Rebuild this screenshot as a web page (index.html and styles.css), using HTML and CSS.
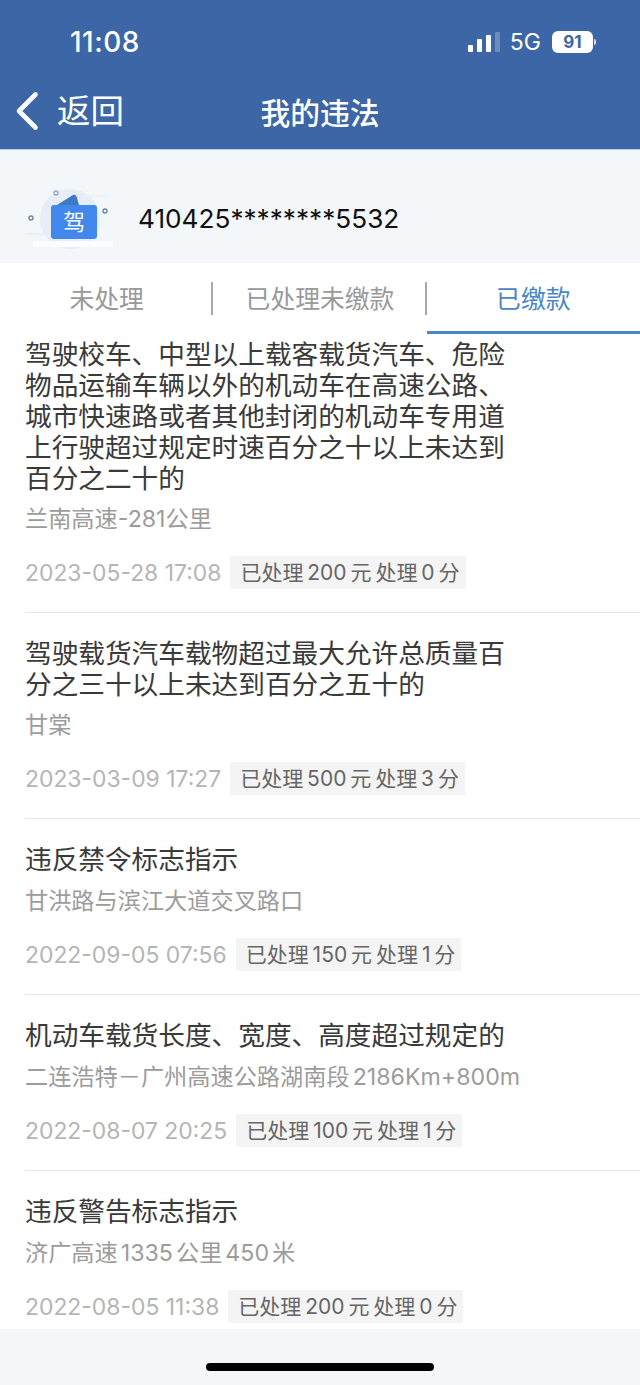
FILE: index.html

```html
<!DOCTYPE html>
<html lang="zh-CN">
<head>
  <meta charset="UTF-8" />
  <meta name="viewport" content="width=device-width, initial-scale=1.0"/>
  <title>我的违法</title>
  <link rel="stylesheet" href="styles.css">
</head>
<body>
  <div class="page">
    <header class="header">
      <div class="status-bar">
        <div class="time">11:08</div>
        <div class="status-right">
          <div class="signal">
            <span class="bar bar1"></span>
            <span class="bar bar2"></span>
            <span class="bar bar3"></span>
            <span class="bar bar4"></span>
          </div>
          <div class="network">5G</div>
          <div class="battery">91</div>
          <div class="battery-nub"></div>
        </div>
      </div>
      <div class="nav">
        <div class="back">
          <svg class="back-icon" width="24" height="40" viewBox="0 0 24 40">
            <polyline points="20.5,3.5 4,20 20.5,36.5" fill="none" stroke="#fff" stroke-width="4.6" stroke-linecap="round" stroke-linejoin="round"/>
          </svg>
          <span class="back-text">返回</span>
        </div>
        <div class="nav-title">我的违法</div>
      </div>
    </header>

    <section class="licence">
      <svg class="licence-icon" width="92" height="64" viewBox="0 0 92 64">
        <circle cx="45" cy="31" r="30" fill="#e6edf7"/>
        <rect x="8" y="53" width="80" height="6" fill="#fbfdfe"/>
        <rect x="0" y="45" width="30" height="2" fill="#eaf0f6"/>
        <rect x="60" y="7" width="24" height="2" fill="#eef2f8"/>
        <path d="M32 17 L48 7 Q51 6 52 10 L54 17 Z" fill="#3f78c4"/>
        <rect x="26" y="17" width="46" height="34" rx="3" fill="#4187ec"/>
        <text x="49" y="42" class="licence-char">驾</text>
        <circle cx="31" cy="5" r="2" fill="none" stroke="#9aa8c8" stroke-width="1.4"/>
        <circle cx="80" cy="23" r="2" fill="none" stroke="#6c86a8" stroke-width="1.4"/>
        <circle cx="6" cy="30" r="2" fill="none" stroke="#6c86a8" stroke-width="1.4"/>
      </svg>
      <div class="licence-no">410425********5532</div>
    </section>

    <nav class="tabs">
      <div class="tab">未处理</div>
      <div class="tab">已处理未缴款</div>
      <div class="tab active">已缴款</div>
    </nav>

    <main class="list">
      <div class="item first">
        <div class="item-title">驾驶校车、中型以上载客载货汽车、危险物品运输车辆以外的机动车在高速公路、城市快速路或者其他封闭的机动车专用道上行驶超过规定时速百分之十以上未达到百分之二十的</div>
        <div class="item-place">兰南高速-281公里</div>
        <div class="item-meta">
          <span class="item-date">2023-05-28 17:08</span>
          <span class="item-tag">已处理 200 元 处理 0 分</span>
        </div>
      </div>
      <div class="item">
        <div class="item-title">驾驶载货汽车载物超过最大允许总质量百分之三十以上未达到百分之五十的</div>
        <div class="item-place">甘棠</div>
        <div class="item-meta">
          <span class="item-date">2023-03-09 17:27</span>
          <span class="item-tag">已处理 500 元 处理 3 分</span>
        </div>
      </div>
      <div class="item">
        <div class="item-title">违反禁令标志指示</div>
        <div class="item-place">甘洪路与滨江大道交叉路口</div>
        <div class="item-meta">
          <span class="item-date">2022-09-05 07:56</span>
          <span class="item-tag">已处理 150 元 处理 1 分</span>
        </div>
      </div>
      <div class="item">
        <div class="item-title">机动车载货长度、宽度、高度超过规定的</div>
        <div class="item-place">二连浩特－广州高速公路湖南段 2186Km+800m</div>
        <div class="item-meta">
          <span class="item-date">2022-08-07 20:25</span>
          <span class="item-tag">已处理 100 元 处理 1 分</span>
        </div>
      </div>
      <div class="item">
        <div class="item-title">违反警告标志指示</div>
        <div class="item-place">济广高速 1335 公里 450 米</div>
        <div class="item-meta">
          <span class="item-date">2022-08-05 11:38</span>
          <span class="item-tag">已处理 200 元 处理 0 分</span>
        </div>
      </div>
    </main>

    <div class="home-area">
      <div class="home-bar"></div>
    </div>
  </div>
</body>
</html>
```

FILE: styles.css

```css
* {
  box-sizing: border-box;
}
body {
  margin: 0;
  padding: 0;
  font-family: 'Inter', 'Noto Sans CJK SC', sans-serif;
  background-color: #f3f7f9;
}
.page {
  width: 640px;
  height: 1385px;
  display: flex;
  flex-direction: column;
  overflow: hidden;
}
.header {
  height: 150px;
  background-color: #3c66a5;
  border-bottom: 1px solid #b4cbe2;
  color: #fff;
  flex-shrink: 0;
}
.status-bar {
  height: 84px;
  display: flex;
  align-items: center;
  justify-content: space-between;
  padding: 0 44px 0 70px;
}
.time {
  font-size: 28px;
  font-weight: 500;
  letter-spacing: 0.5px;
}
.status-right {
  display: flex;
  align-items: center;
}
.signal {
  display: flex;
  align-items: flex-end;
  gap: 4px;
  height: 20px;
  margin-right: 10px;
}
.bar {
  width: 5px;
  background-color: #fff;
  border-radius: 1px;
}
.bar1 { height: 7px; }
.bar2 { height: 13px; }
.bar3 { height: 17px; }
.bar4 { height: 20px; background-color: #6c8cbc; }
.network {
  font-size: 23px;
  margin-right: 11px;
}
.battery {
  width: 41px;
  height: 22px;
  background-color: #fff;
  border-radius: 6px;
  color: #3c66a5;
  font-size: 17px;
  font-weight: 700;
  line-height: 22px;
  text-align: center;
}
.battery-nub {
  width: 2px;
  height: 6px;
  margin-left: 1px;
  background-color: #d5deec;
  border-radius: 0 2px 2px 0;
}
.nav {
  height: 55px;
  position: relative;
  display: flex;
  align-items: center;
  justify-content: center;
}
.back {
  position: absolute;
  left: 15px;
  top: 7px;
  display: flex;
  align-items: center;
  gap: 18px;
}
.back-text {
  font-size: 33.5px;
  line-height: 40px;
}
.nav-title {
  font-size: 29.8px;
  font-weight: 500;
  padding-bottom: 1px;
}
.licence {
  height: 113px;
  display: flex;
  align-items: center;
  padding: 23px 0 0 25px;
  flex-shrink: 0;
}
.licence-icon {
  flex-shrink: 0;
  margin-top: 4px;
}
.licence-char {
  fill: #fff;
  font-size: 22px;
  text-anchor: middle;
}
.licence-no {
  margin-left: 21px;
  font-size: 26.2px;
  color: #111;
}
.tabs {
  height: 71px;
  background-color: #fff;
  display: flex;
  flex-shrink: 0;
}
.tab {
  flex: 1;
  position: relative;
  font-size: 24.8px;
  color: #999;
  text-align: center;
  line-height: 72px;
}
.tab::after {
  content: "";
  position: absolute;
  right: 0;
  top: 19px;
  height: 33px;
  width: 2px;
  background-color: #a9a9a9;
}
.tab.active {
  color: #4a86c8;
  border-bottom: 3px solid #4a86c8;
}
.tab.active::after {
  display: none;
}
.list {
  height: 995px;
  background-color: #fff;
  overflow: hidden;
  flex-shrink: 0;
}
.item {
  margin-left: 25px;
  padding: 25px 0 23px;
  border-bottom: 1px solid #e4e4e4;
}
.item.first {
  padding-top: 5px;
}
.item-title {
  width: 484px;
  min-height: 33px;
  padding-bottom: 1px;
  font-size: 26.67px;
  line-height: 31px;
  color: #3a3a3a;
}
.item-place {
  margin-top: 8px;
  font-size: 23.2px;
  line-height: 32px;
  color: #9c9c9c;
  word-spacing: -3.5px;
}
.item-meta {
  margin-top: 21px;
  display: flex;
  align-items: center;
  gap: 9px;
}
.item-date {
  font-size: 22.9px;
  color: #b5b5b5;
}
.item-tag {
  height: 33px;
  padding: 0 6px 0 10px;
  background-color: #f4f4f4;
  color: #666;
  font-size: 21px;
  line-height: 33px;
  word-spacing: -2px;
}
.home-area {
  flex: 1;
  display: flex;
  justify-content: center;
  padding-top: 34px;
}
.home-bar {
  width: 228px;
  height: 8px;
  background-color: #000;
  border-radius: 4px;
}
```
